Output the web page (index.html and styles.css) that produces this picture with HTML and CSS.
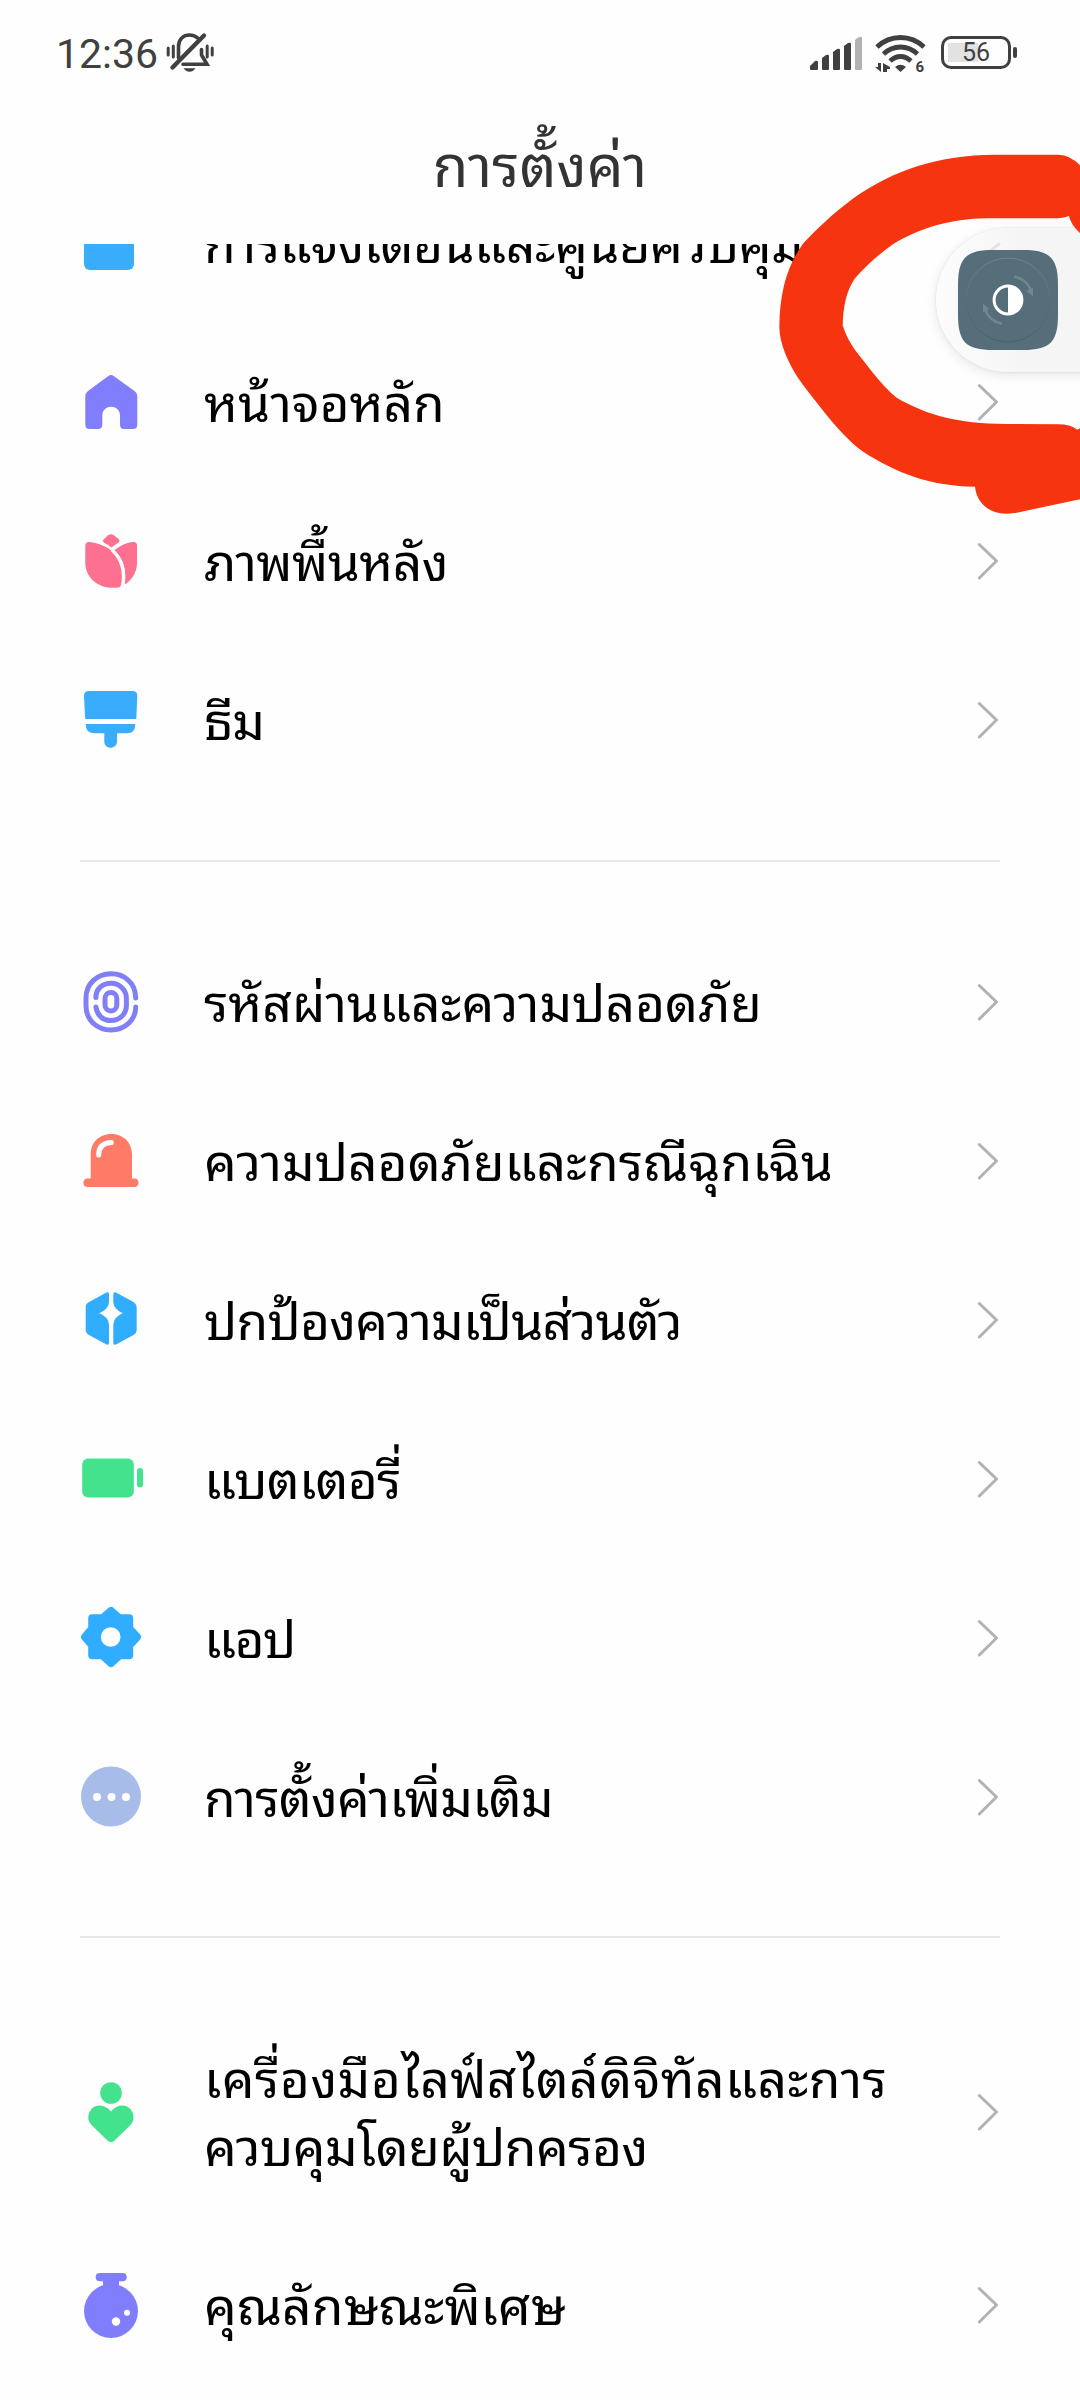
FILE: index.html
```html
<!DOCTYPE html>
<html lang="th">
<head>
<meta charset="utf-8">
<title>การตั้งค่า</title>
<link rel="stylesheet" href="styles.css">
</head>
<body>
<svg class="defs" aria-hidden="true">
  <symbol id="chevron" viewBox="0 0 24 40"><path d="M3.3 3.5 20.5 20 3.3 37" fill="none" stroke="#b2b2b2" stroke-width="3" stroke-linecap="round" stroke-linejoin="round"/></symbol>
</svg>
<div class="screen">
  <header class="status">
    <div class="status-left">
      <span class="time">12:36</span>
      <svg class="mute" viewBox="0 0 50 46" fill="none" stroke="#404040" stroke-width="3.6" stroke-linecap="round">
        <path d="M13.5 28V16.5C13.5 9 18.5 5 24.5 5c3.500 0 6.500 1.300 8.500 3.300"/>
        <path d="M36.500 19.500V25l5.500 9.300H18"/>
        <path d="M39 5.500 7.500 37.500" stroke-width="4.400"/>
        <path d="M3.200 18v7M8.300 16v11M42.200 16v11M47.200 18v7" stroke-width="3"/>
        <path d="M18.500 38.300h12q-2.500 3.500-6 3.500t-6-3.500z" fill="#404040" stroke="none"/>
      </svg>
    </div>
    <div class="status-right">
      <svg class="signal" viewBox="0 0 52 36" fill="#404040">
        <path d="M0 34v-3l5-5q3-1 3 1v7q0 1-1 1H1q-1 0-1-1zM12 34V23l4-3q3-1 3 1v13q0 1-1 1h-5q-1 0-1-1zM23 34V17l4-3q3-1 3 1v19q0 1-1 1h-5q-1 0-1-1zM34 34V11l4-3q3-1 3 1v25q0 1-1 1h-5q-1 0-1-1z"/>
        <path d="M45 34V5l4-3q3-1 3 1v31q0 1-1 1h-5q-1 0-1-1z" fill="#b2b2b2"/>
      </svg>
      <svg class="wifi" viewBox="0 0 52 40" fill="none" stroke="#404040" stroke-width="4.800">
        <path d="M2 13Q12 3.500 25.500 3.500T49 13"/>
        <path d="M8.500 20Q16 13 25.500 13T42.500 20"/>
        <path d="M15 27Q20 22.500 25.500 22.500T36 27"/>
        <path d="M20 33q5.500-4.500 11 0l-5.500 5z" fill="#404040" stroke="none"/>
        <path d="M0 33h3v-4h3v9zM8 38v-9l7 4v2h-3v3z" fill="#404040" stroke="none"/>
        <text x="40.500" y="38.300" class="wifi-gen">6</text>
      </svg>
      <div class="battery"><span class="battery-body"><span class="battery-text">56</span></span><span class="battery-tip"></span></div>
    </div>
  </header>
  <h1 class="title">การตั้งค่า</h1>
  <main class="list">
    <section class="group first">
      <div class="row">
        <svg class="icon" viewBox="0 0 72 72"><rect x="9" y="9" width="50" height="54" rx="6" fill="#39adfc"/></svg>
        <span class="label snug">การแจ้งเตือนและศูนย์ควบคุม</span><svg class="chev"><use href="#chevron"/></svg>
      </div>
      <div class="row">
        <svg class="icon" viewBox="0 0 72 72"><path fill="#807efd" d="M33 10.200Q36 8 39 10.200L59.500 25Q62.300 27 62.300 31V58.500Q62.300 63 58 63H49Q45 63 45 58.500V49.500C45 37.700 27.300 37.700 27.300 49.500V58.500Q27.300 63 23 63H14.500Q10.300 63 10.300 58.500V31Q10.300 27 13 25Z"/></svg>
        <span class="label">หน้าจอหลัก</span><svg class="chev"><use href="#chevron"/></svg>
      </div>
      <div class="row">
        <svg class="icon" viewBox="0 0 72 72" fill="#fe708f"><path d="M33 10.300Q36 8 39 10.300L43.500 14Q45.500 16 43.500 17.500L36.300 22.500Q33 19.500 28.800 17.500Q27 16 29 14Z"/><path d="M10.300 21Q10.300 17 14 17C34 18.500 48.500 33 47.700 50Q47.500 57 45.800 60.500Q45 63 41.500 62.700H36C20 62 10.300 50 10.300 38Z"/><path d="M39 25.700C45 20.500 52 17.500 58.500 17Q62 17 62 20.500V38C62 48 56 57 46.700 61C51.500 48 51 36 39 25.700Z"/><path d="M37 25C46 33 51 44 47.600 62" fill="none" stroke="#fefefe" stroke-width="3.500"/></svg>
        <span class="label snug">ภาพพื้นหลัง</span><svg class="chev"><use href="#chevron"/></svg>
      </div>
      <div class="row">
        <svg class="icon" viewBox="0 0 72 72" fill="#39adfc"><path d="M9 12Q9 7 14 7H57.500Q62.300 7 62.300 12L61.300 35H10.200Z"/><path d="M10.700 40H60.300Q60.500 49.300 52 49.300H42V57.500C42 65.800 29.300 65.800 29.300 57.500V49.300H19Q10.500 49 10.700 40Z"/></svg>
        <span class="label tight">ธีม</span><svg class="chev"><use href="#chevron"/></svg>
      </div>
    </section>
    <section class="group">
      <div class="row">
        <svg class="icon" viewBox="0 0 72 72" fill="none" stroke="#817ff5" stroke-width="5" stroke-linecap="round"><path d="M60.700 32C60.700 17.500 50 7.800 35.900 7.800S11 18 11 32V40C11 54 22 63.900 35.900 63.900S60.700 54 60.700 41"/><path d="M20.900 31.500C20.900 23 27.500 17.300 36.100 17.300S51.400 24 51.400 32.500V39.500C51.400 48 44.500 54.600 36.100 54.600S22 49 20.900 41"/><rect x="30" y="26.500" width="11.800" height="18.500" rx="5.900"/></svg>
        <span class="label">รหัสผ่านและความปลอดภัย</span><svg class="chev"><use href="#chevron"/></svg>
      </div>
      <div class="row">
        <svg class="icon" viewBox="0 0 72 72" fill="#fe7c67"><path d="M15.700 53.500V29.500C15.700 2.200 57 2.200 57 29.500V53.500H59.500C65 53.500 65 62 59.500 62H12.500C7 62 7 53.500 12.500 53.500Z"/><path d="M23.700 30Q23.700 18 36.300 17.500" fill="none" stroke="#fff" stroke-width="5" stroke-linecap="round"/></svg>
        <span class="label">ความปลอดภัยและกรณีฉุกเฉิน</span><svg class="chev"><use href="#chevron"/></svg>
      </div>
      <div class="row">
        <svg class="icon" viewBox="0 0 72 72" fill="#31adff"><path d="M34 10Q34 7.500 31.500 8.500L14 18Q10.700 20 10.700 23V46Q10.700 49 14 51L31.500 60.500Q34 61.500 34 59V41Q34 33 24.300 29.200Q34 25 34 18Z"/><path d="M38.300 10Q38.300 7.500 41 8.500L58.500 18Q61.700 20 61.700 23V46Q61.700 49 58.500 51L41 60.500Q38.300 61.500 38.300 59V41Q38.300 33 47.700 29.200Q38.300 25 38.300 18Z"/></svg>
        <span class="label tight">ปกป้องความเป็นส่วนตัว</span><svg class="chev"><use href="#chevron"/></svg>
      </div>
      <div class="row">
        <svg class="icon" viewBox="0 0 72 72" fill="#43e38e"><rect x="7.200" y="15.500" width="51.600" height="39" rx="6"/><rect x="62" y="25" width="6" height="19.500" rx="3"/></svg>
        <span class="label tight">แบตเตอรี่</span><svg class="chev"><use href="#chevron"/></svg>
      </div>
      <div class="row">
        <svg class="icon" viewBox="0 0 72 72"><path fill="#31adff" stroke="#31adff" stroke-width="8" stroke-linejoin="round" d="M36 9 44.300 16.300H54.200V26.500L62 35 54.200 43.500V53.200H44.500L36 61 27.500 53.200H17.200V43.500L10 35 17.200 26.500V16.300H27.500Z"/><circle cx="35.700" cy="35" r="9.800" fill="#fff"/></svg>
        <span class="label tighter">แอป</span><svg class="chev"><use href="#chevron"/></svg>
      </div>
      <div class="row">
        <svg class="icon" viewBox="0 0 72 72"><circle cx="36" cy="35.500" r="30" fill="#a7bce9"/><g fill="#fff"><circle cx="22" cy="36" r="4"/><circle cx="36.500" cy="36" r="4"/><circle cx="51" cy="36" r="4"/></g></svg>
        <span class="label tight">การตั้งค่าเพิ่มเติม</span><svg class="chev"><use href="#chevron"/></svg>
      </div>
    </section>
    <section class="group last">
      <div class="row tall">
        <svg class="icon" viewBox="0 0 72 72" fill="#43e38e"><circle cx="36" cy="17" r="10.800"/><path d="M36 35.500C30 28 21 28 17 32.500C12 37.500 12 45 17 49.500L33 65Q36 67.300 39 65L55 49.500C60 45 59.500 37.500 55 32.500C50 28 42 28 36 35.500Z"/></svg>
        <span class="label"><span class="loose">เครื่องมือไลฟ์สไตล์ดิจิทัลและการ</span><br><span class="snug">ควบคุมโดยผู้ปกครอง</span></span><svg class="chev"><use href="#chevron"/></svg>
      </div>
      <div class="row">
        <svg class="icon" viewBox="0 0 72 72" fill="#807efd"><rect x="20.700" y="4" width="31" height="8.300" rx="4.100"/><path d="M28 11H44V18H28Z"/><circle cx="36" cy="42" r="27"/><g fill="#fff"><circle cx="41" cy="52.500" r="4.200"/><circle cx="52" cy="43.700" r="3"/></g></svg>
        <span class="label">คุณลักษณะพิเศษ</span><svg class="chev"><use href="#chevron"/></svg>
      </div>
    </section>
  </main>
  <aside class="panel">
    <svg class="panel-ghost" viewBox="0 0 24 40"><path d="M10 12 20 4" stroke="#e4e4e4" stroke-width="3" stroke-linecap="round"/></svg>
    <div class="tile">
      <svg viewBox="0 0 100 100" fill="none">
        <path d="M0 35C0 8 8 0 35 0H65C92 0 100 8 100 35V65C100 92 92 100 65 100H35C8 100 0 92 0 65Z" fill="#566e79"/>
        <circle cx="50" cy="50" r="42" stroke="url(#ring)" stroke-width="1"/>
        <defs><linearGradient id="ring" x1="0" y1="0" x2="0" y2="1"><stop stop-color="#71868f"/><stop offset=".5" stop-color="#566e79"/><stop offset="1" stop-color="#4a616c"/></linearGradient></defs>
        <g stroke="#71868f" stroke-width="2.500"><path d="M56 26.500Q69 29 73 41"/><path d="M44 73.700Q31 71 27 59"/></g>
        <path d="M68.500 41 75 37.500V46ZM31.500 59 25 62.500V54Z" fill="#71868f"/>
        <circle cx="50" cy="50" r="13.900" stroke="#fff" stroke-width="3"/>
        <path d="M50 35.500A14.500 14.500 0 0 1 50 64.500Z" fill="#fff"/>
      </svg>
    </div>
  </aside>
  <svg class="scribble" viewBox="0 0 1020 1200"><path fill="#f63510" d="M1020 76Q990 44 955 44H770C600 43 460 90 340 175C270 228 230 268 190 310C145 370 119 450 118 560C118 610 145 670 175 715Q195 745 240 800C290 865 330 905 365 932C470 1000 570 1038 705 1040C710 1090 750 1122 800 1121L830 1118 1020 1078V865L1012 869Q990 853 955 853L800 852C650 850 560 825 470 773C430 740 400 700 345 630Q320 595 308 556C310 500 318 455 345 415C380 375 420 340 460 312C540 265 630 236 740 235H950Q975 233 987 228Q993 255 1020 279Z"/></svg>
</div>
</body>
</html>
```
FILE: styles.css
```css
* { box-sizing: border-box; }
body {
  margin: 0;
  background: #fff;
  color: #000;
  font-family: "Noto Sans Thai Looped", "Noto Sans", sans-serif;
}
.defs { display: none; }
.screen {
  position: relative;
  display: flex;
  flex-direction: column;
  width: 1080px;
  height: 2400px;
  overflow: hidden;
  background: #fefefe;
}
.status {
  display: flex;
  justify-content: space-between;
  flex: none;
  height: 106px;
  padding: 30px 63px 0 56px;
  color: #404040;
  font-family: Roboto, sans-serif;
}
.status-left, .status-right { display: flex; align-items: flex-start; }
.time { font-size: 41px; line-height: 48px; font-weight: 450; margin-right: 7px; }
.mute { width: 50px; height: 46px; }
.status-right { padding-top: 5px; }
.signal { width: 52px; height: 36px; }
.wifi { width: 52px; height: 40px; margin: -1px 14px 0 13px; overflow: visible; }
.wifi-gen { font: 700 15px Roboto, sans-serif; fill: #404040; stroke: none; }
.battery { display: flex; align-items: center; gap: 2px; margin-top: 1px; }
.battery-body {
  display: flex;
  align-items: center;
  justify-content: center;
  width: 70px;
  height: 33px;
  border: 3.500px solid #404040;
  border-radius: 10px;
  background: linear-gradient(#e2e2e2, #e2e2e2) 4px 4px / 30px 19px no-repeat;
}
.battery-text { font-size: 25px; line-height: 26px; }
.battery-tip { width: 4px; height: 11px; border-radius: 2px; background: #404040; }
.title {
  flex: none;
  height: 138px;
  margin: 0;
  text-align: center;
  font-size: 58px;
  line-height: 110px;
  font-weight: 400;
  color: #333;
}
.list { flex: 1; min-height: 0; overflow: hidden; padding: 0 80px; }
.group { padding: 60px 0 60px; border-bottom: 2px solid #e6e6e6; }
.group.first { margin-top: -81px; padding: 0 0 61px; }
.group.last { border-bottom: 0; }
.row { display: flex; align-items: center; height: 159px; }
.row.tall { height: 227px; }
.icon { flex: none; width: 72px; height: 72px; margin: 0 57px 0 -5px; }
.label {
  flex: 1;
  padding-bottom: 6px;
  font-size: 51.500px;
  line-height: 68px;
  font-weight: 400;
  white-space: nowrap;
}
.snug { letter-spacing: -.5px; }
.tight { letter-spacing: -.75px; }
.tighter { letter-spacing: -1.5px; }
.loose { letter-spacing: .5px; }
.chev { flex: none; width: 24px; height: 40px; }
.panel {
  position: absolute;
  left: 936px;
  top: 228px;
  width: 150px;
  height: 144px;
  padding: 22px;
  border-radius: 72px 0 0 72px;
  background: linear-gradient(90deg, #fcfcfc, #f5f5f5 60%);
  box-shadow: 0 3px 12px rgba(0, 0, 0, .1), 0 0 2px rgba(0, 0, 0, .12);
}
.panel-ghost { position: absolute; left: 43px; top: 12px; width: 24px; height: 40px; }
.tile { position: relative; width: 100px; height: 100px; }
.tile svg { display: block; width: 100px; height: 100px; }
.scribble { position: absolute; left: 740px; top: 140px; width: 340px; height: 400px; }
```
